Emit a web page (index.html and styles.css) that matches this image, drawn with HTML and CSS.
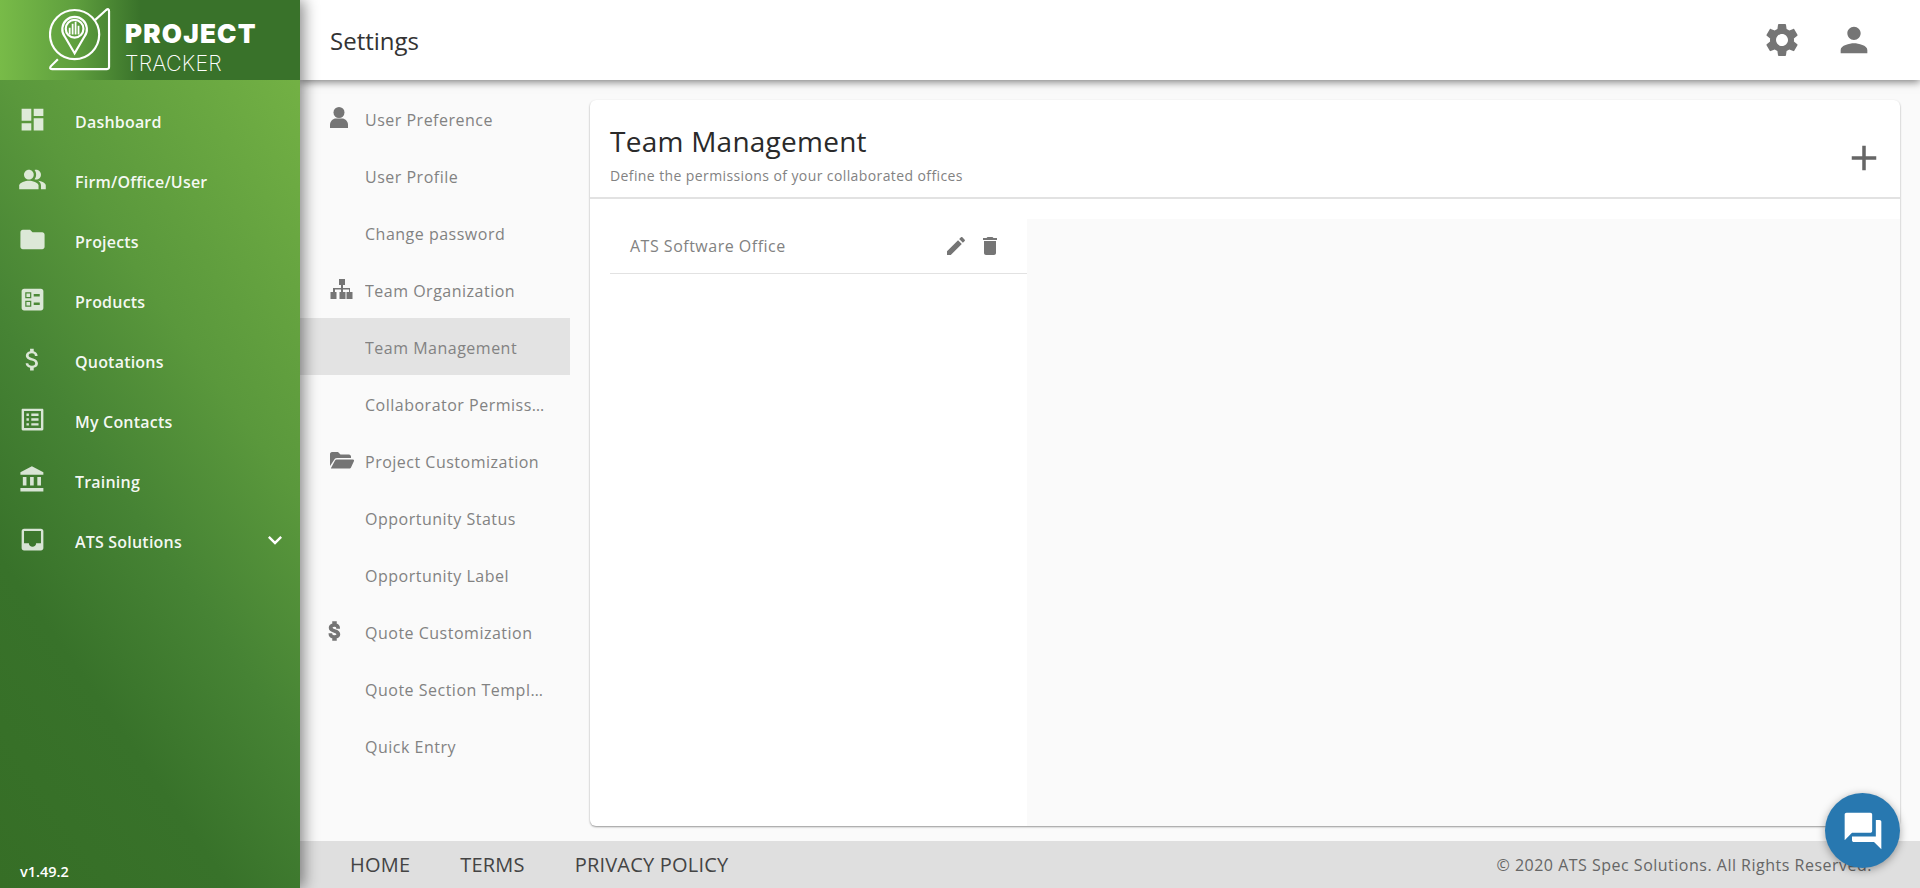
FILE: index.html
```html
<!DOCTYPE html>
<html lang="en">
<head>
    <meta charset="UTF-8">
    <title>Settings</title>
    <link rel="stylesheet" href="styles.css">
</head>
<body>
    <aside class="sidebar">
        <div class="brand">
            <svg class="brand-mark" viewBox="0 0 64 66" fill="none" stroke="#fff" stroke-width="2.2">
                <circle cx="26" cy="27" r="25"/>
                <path d="M47 12 L58 2 Q61 0 61 3 V60 Q61 62 59 62 H3 Q0 62 2 59 L9 52"/>
                <path d="M26 46 L16 29 A12.5 12.5 0 1 1 36 29 Z"/>
                <circle cx="26" cy="21" r="9"/>
                <path d="M21 27 V20 M24 27 V16 M27 27 V14 M30 27 V18" stroke-width="1.8"/>
            </svg>
            <div class="brand-text">
                <span class="brand-top">PROJECT</span>
                <span class="brand-bottom">TRACKER</span>
            </div>
        </div>
        <nav class="main-nav">
            <a class="nav-item"><svg viewBox="0 0 24 24"><path d="M3 13h8V3H3v10zm0 8h8v-6H3v6zm10 0h8V11h-8v10zm0-18v6h8V3h-8z"/></svg><span>Dashboard</span></a>
            <a class="nav-item"><svg viewBox="0 0 24 24"><path d="M16.67 13.13C18.04 14.06 19 15.32 19 17v3h4v-3c0-2.18-3.57-3.47-6.33-3.87z"/><path d="M15 12c2.21 0 4-1.79 4-4s-1.79-4-4-4c-.47 0-.91.1-1.33.24C14.5 5.27 15 6.58 15 8s-.5 2.73-1.33 3.76c.42.14.86.24 1.33.24z"/><path d="M9 12c2.21 0 4-1.79 4-4s-1.79-4-4-4-4 1.79-4 4 1.79 4 4 4z"/><path d="M9 13c-2.67 0-8 1.34-8 4v3h16v-3c0-2.66-5.33-4-8-4z"/></svg><span>Firm/Office/User</span></a>
            <a class="nav-item"><svg viewBox="0 0 24 24"><path d="M10 4H4c-1.1 0-1.99.9-1.99 2L2 18c0 1.1.9 2 2 2h16c1.1 0 2-.9 2-2V8c0-1.1-.9-2-2-2h-8l-2-2z"/></svg><span>Projects</span></a>
            <a class="nav-item"><svg viewBox="0 0 24 24"><path fill-rule="evenodd" d="M13 9.5h5v-2h-5v2zm0 7h5v-2h-5v2zm6 4.5H5c-1.1 0-2-.9-2-2V5c0-1.1.9-2 2-2h14c1.1 0 2 .9 2 2v14c0 1.1-.9 2-2 2zM6 11h5V6H6v5zm1-4h3v3H7V7zM6 18h5v-5H6v5zm1-4h3v3H7v-3z"/></svg><span>Products</span></a>
            <a class="nav-item"><svg viewBox="0 0 24 24"><path d="M11.8 10.9c-2.27-.59-3-1.2-3-2.15 0-1.09 1.01-1.85 2.7-1.85 1.78 0 2.44.85 2.5 2.1h2.21c-.07-1.72-1.12-3.3-3.21-3.81V3h-3v2.16c-1.94.42-3.5 1.68-3.5 3.61 0 2.31 1.91 3.46 4.7 4.13 2.5.6 3 1.48 3 2.41 0 .69-.49 1.79-2.7 1.79-2.06 0-2.87-.92-2.98-2.1h-2.2c.12 2.19 1.76 3.42 3.68 3.83V21h3v-2.15c1.95-.37 3.5-1.5 3.5-3.55 0-2.84-2.43-3.81-4.7-4.4z"/></svg><span>Quotations</span></a>
            <a class="nav-item"><svg viewBox="0 0 24 24"><path d="M19 5v14H5V5h14m1.1-2H3.9c-.5 0-.9.4-.9.9v16.2c0 .4.4.9.9.9h16.2c.4 0 .9-.5.9-.9V3.9c0-.5-.5-.9-.9-.9zM11 7h6v2h-6V7zm0 4h6v2h-6v-2zm0 4h6v2h-6zM7 7h2v2H7zm0 4h2v2H7zm0 4h2v2H7z"/></svg><span>My Contacts</span></a>
            <a class="nav-item"><svg viewBox="0 0 24 24"><path d="M4 10v7h3v-7H4zm6 0v7h3v-7h-3zM2 22h19v-3H2v3zm14-12v7h3v-7h-3zm-4.5-9L2 6v2h19V6l-9.5-5z"/></svg><span>Training</span></a>
            <a class="nav-item"><svg viewBox="0 0 24 24"><path d="M19 3H4.99c-1.11 0-1.98.89-1.98 2L3 19c0 1.1.88 2 1.99 2H19c1.1 0 2-.9 2-2V5c0-1.11-.9-2-2-2zm0 12h-4c0 1.66-1.35 3-3 3s-3-1.34-3-3H4.99V5H19v10z"/></svg><span>ATS Solutions</span><svg class="nav-arrow" viewBox="0 0 24 24"><path d="M16.59 8.59L12 13.17 7.41 8.59 6 10l6 6 6-6z"/></svg></a>
        </nav>
        <div class="version">v1.49.2</div>
    </aside>

    <div class="page">
        <header class="topbar">
            <h1>Settings</h1>
            <div class="topbar-icons">
                <svg viewBox="0 0 24 24"><path d="M19.14 12.94c.04-.3.06-.61.06-.94 0-.32-.02-.64-.07-.94l2.03-1.58c.18-.14.23-.41.12-.61l-1.92-3.32c-.12-.22-.37-.29-.59-.22l-2.39.96c-.5-.38-1.03-.7-1.62-.94l-.36-2.54c-.04-.24-.24-.41-.48-.41h-3.84c-.24 0-.43.17-.47.41l-.36 2.54c-.59.24-1.13.57-1.62.94l-2.39-.96c-.22-.08-.47 0-.59.22L2.74 8.87c-.12.21-.08.47.12.61l2.03 1.58c-.05.3-.09.63-.09.94s.02.64.07.94l-2.03 1.58c-.18.14-.23.41-.12.61l1.92 3.32c.12.22.37.29.59.22l2.39-.96c.5.38 1.03.7 1.62.94l.36 2.54c.05.24.24.41.48.41h3.84c.24 0 .44-.17.47-.41l.36-2.54c.59-.24 1.13-.56 1.62-.94l2.39.96c.22.08.47 0 .59-.22l1.92-3.32c.12-.22.07-.47-.12-.61l-2.01-1.58zM12 15.6c-1.98 0-3.6-1.62-3.6-3.6s1.62-3.6 3.6-3.6 3.6 1.62 3.6 3.6-1.62 3.6-3.6 3.6z"/></svg>
                <svg viewBox="0 0 24 24"><path d="M12 12c2.21 0 4-1.79 4-4s-1.79-4-4-4-4 1.79-4 4 1.79 4 4 4zm0 2c-2.67 0-8 1.34-8 4v2h16v-2c0-2.66-5.33-4-8-4z"/></svg>
            </div>
        </header>

        <div class="content">
            <nav class="sub-nav">
                <div class="sub-item">
                    <svg viewBox="0 0 24 24"><circle cx="9" cy="6.5" r="5.5"/><path d="M0 22v-3c0-4 3-6.500 6-6.500h6c3 0 6 2.500 6 6.500v3z"/></svg>
                    <span>User Preference</span>
                </div>
                <div class="sub-item"><span>User Profile</span></div>
                <div class="sub-item"><span>Change password</span></div>
                <div class="sub-item">
                    <svg viewBox="0 0 24 24"><path d="M9 2h6v6h-2v3h7v4h2.500v7h-6v-7H19v-2.500h-6V15h2.500v7h-6v-7H11v-2.500H5V15h1.500v7h-6v-7H3v-4h8V8H9z"/></svg>
                    <span>Team Organization</span>
                </div>
                <div class="sub-item active"><span>Team Management</span></div>
                <div class="sub-item"><span>Collaborator Permissions</span></div>
                <div class="sub-item">
                    <svg viewBox="0 0 24 24"><path d="M0 18V6c0-1 .8-2 2-2h6l2.500 2.500H19c1 0 2 1 2 2V10H7c-1.500 0-2.500.8-3 2z"/><path d="M1 20l4-7.500c.3-.6 1-1 1.700-1H23c.8 0 1.300.8 1 1.500l-3 6.500c-.3.6-1 1-1.700 1H1.800c-.7 0-1-.3-.8-.5z"/></svg>
                    <span>Project Customization</span>
                </div>
                <div class="sub-item"><span>Opportunity Status</span></div>
                <div class="sub-item"><span>Opportunity Label</span></div>
                <div class="sub-item">
                    <svg class="sub-dollar" viewBox="0 0 24 24"><path d="M11.8 10.9c-2.27-.59-3-1.2-3-2.15 0-1.09 1.01-1.85 2.7-1.85 1.78 0 2.44.85 2.5 2.1h2.21c-.07-1.72-1.12-3.3-3.21-3.81V3h-3v2.16c-1.94.42-3.5 1.68-3.5 3.61 0 2.31 1.91 3.46 4.7 4.13 2.5.6 3 1.48 3 2.41 0 .69-.49 1.79-2.7 1.79-2.06 0-2.87-.92-2.98-2.1h-2.2c.12 2.19 1.76 3.42 3.68 3.83V21h3v-2.15c1.95-.37 3.5-1.5 3.5-3.55 0-2.84-2.43-3.81-4.7-4.4z"/></svg>
                    <span>Quote Customization</span>
                </div>
                <div class="sub-item"><span>Quote Section Templates</span></div>
                <div class="sub-item"><span>Quick Entry</span></div>
            </nav>

            <main class="card">
                <div class="card-header">
                    <div>
                        <h2>Team Management</h2>
                        <p>Define the permissions of your collaborated offices</p>
                    </div>
                    <svg class="add-icon" viewBox="0 0 24 24"><path d="M19 13h-6v6h-2v-6H5v-2h6V5h2v6h6v2z"/></svg>
                </div>
                <div class="card-body">
                    <div class="team-list">
                        <div class="team-row">
                            <span>ATS Software Office</span>
                            <svg viewBox="0 0 24 24"><path d="M3 17.25V21h3.750L17.810 9.940l-3.750-3.750L3 17.250zM20.710 7.040c.39-.39.39-1.020 0-1.410l-2.340-2.340c-.39-.39-1.020-.39-1.410 0l-1.830 1.830 3.750 3.750 1.830-1.830z"/></svg>
                            <svg viewBox="0 0 24 24"><path d="M6 19c0 1.100.9 2 2 2h8c1.100 0 2-.9 2-2V7H6v12zM19 4h-3.500l-1-1h-5l-1 1H5v2h14V4z"/></svg>
                        </div>
                    </div>
                    <div class="team-detail"></div>
                </div>
            </main>
        </div>

        <footer class="footer">
            <a>HOME</a>
            <a>TERMS</a>
            <a>PRIVACY POLICY</a>
            <span class="copyright">© 2020 ATS Spec Solutions. All Rights Reserved.</span>
        </footer>
    </div>

    <button class="chat-button">
        <svg viewBox="0 0 24 24"><path d="M21 6h-2v9H6v2c0 .55.45 1 1 1h11l4 4V7c0-.55-.45-1-1-1zm-4 6V3c0-.55-.45-1-1-1H3c-.55 0-1 .45-1 1v14l4-4h10c.55 0 1-.45 1-1z"/></svg>
    </button>
</body>
</html>
```

FILE: styles.css
```css
* {
    box-sizing: border-box;
}

body {
    font-family: "Open Sans", sans-serif;
    background-color: #fafafa;
    margin: 0;
    height: 100vh;
    display: flex;
    overflow: hidden;
}

/* sidebar */
.sidebar {
    width: 300px;
    flex-shrink: 0;
    display: flex;
    flex-direction: column;
    background: linear-gradient(235deg, #75b345 3%, #5a983c 38%, #468334 57%, #38722a 75%, #366e26 100%);
    box-shadow: 4px 0 14px rgba(0, 0, 0, 0.45);
    z-index: 3;
}

.brand {
    height: 80px;
    flex-shrink: 0;
    display: flex;
    align-items: center;
    padding-left: 49px;
    gap: 13px;
    background: linear-gradient(90deg, #78bb48 0%, #5f9f3e 25%, #39722a 47%, #39722a 100%);
}

.brand-mark {
    width: 63px;
    height: 65px;
}

.brand-text {
    display: flex;
    flex-direction: column;
    margin-top: 14px;
    color: white;
    font-family: Inter, sans-serif;
}

.brand-top {
    font-size: 26px;
    font-weight: 900;
    letter-spacing: 1.2px;
    line-height: 30px;
}

.brand-bottom {
    font-size: 21.5px;
    font-weight: 200;
    letter-spacing: 0.2px;
    line-height: 24px;
    margin-top: 2px;
}

.main-nav {
    padding-top: 12px;
    flex: 1;
}

.nav-item {
    display: flex;
    align-items: center;
    height: 60px;
    padding-left: 18px;
    color: rgba(255, 255, 255, 0.95);
    font-size: 16px;
    font-weight: 600;
    letter-spacing: 0.2px;
}

.nav-item svg {
    width: 29px;
    height: 29px;
    margin-right: 28px;
    margin-top: -5px;
    fill: rgba(255, 255, 255, 0.8);
}

.nav-item .nav-arrow {
    margin: -4px 11px 0 auto;
    fill: white;
    width: 28px;
    height: 28px;
}

.version {
    color: white;
    font-size: 14.5px;
    font-weight: 600;
    padding: 0 0 7px 20px;
}

/* right side */
.page {
    flex: 1;
    min-width: 0;
    display: flex;
    flex-direction: column;
}

.topbar {
    height: 80px;
    flex-shrink: 0;
    display: flex;
    align-items: center;
    justify-content: space-between;
    padding: 0 46px 0 30px;
    background-color: white;
    box-shadow: 0 2px 8px rgba(0, 0, 0, 0.5);
    z-index: 2;
}

.topbar h1 {
    font-size: 24px;
    font-weight: 400;
    color: #333;
    margin: 0;
}

.topbar-icons {
    display: flex;
    gap: 32px;
}

.topbar-icons svg {
    width: 40px;
    height: 40px;
    fill: #757575;
}

.content {
    flex: 1;
    min-height: 0;
    display: flex;
}

.sub-nav {
    width: 270px;
    flex-shrink: 0;
    padding-top: 10px;
}

.sub-item {
    display: flex;
    align-items: center;
    height: 57px;
    padding: 3px 22px 0 65px;
    color: #828282;
    font-size: 16px;
    letter-spacing: 0.5px;
}

.sub-item span {
    white-space: nowrap;
    overflow: hidden;
    text-overflow: ellipsis;
}

.sub-item svg {
    width: 24px;
    height: 24px;
    margin-left: -35px;
    margin-right: 11px;
    margin-top: -5px;
    fill: #757575;
    flex-shrink: 0;
}

.sub-item .sub-dollar {
    stroke: #757575;
    stroke-width: 1.5;
    margin-left: -42px;
    margin-right: 18px;
}

.sub-item.active {
    background-color: #e3e3e3;
}

.card {
    flex: 1;
    margin: 20px 20px 15px 20px;
    display: flex;
    flex-direction: column;
    background-color: white;
    border-radius: 6px;
    box-shadow: 0 1px 2px rgba(0, 0, 0, 0.4);
}

.card-header {
    height: 99px;
    flex-shrink: 0;
    display: flex;
    align-items: center;
    justify-content: space-between;
    padding: 0 15px 0 20px;
    border-bottom: 2px solid #e2e2e2;
}

.card-header h2 {
    font-size: 28px;
    font-weight: 400;
    color: #2a2a2a;
    letter-spacing: 0.25px;
    margin: 10px 0 0 0;
    line-height: 38px;
}

.card-header p {
    font-size: 14px;
    color: #828282;
    letter-spacing: 0.4px;
    margin: 6px 0 0 0;
}

.add-icon {
    width: 42px;
    height: 42px;
    margin-top: 18px;
    fill: #666;
}

.card-body {
    flex: 1;
    min-height: 0;
    display: flex;
    padding: 20px 0 0 20px;
    border-radius: 0 0 6px 6px;
}

.team-list {
    width: 417px;
    flex-shrink: 0;
}

.team-row {
    height: 55px;
    display: flex;
    align-items: center;
    gap: 10px;
    padding: 0 25px 0 20px;
    border-bottom: 1px solid #e2e2e2;
    color: #828282;
    font-size: 16px;
    letter-spacing: 0.5px;
}

.team-row span {
    flex: 1;
}

.team-row svg {
    width: 24px;
    height: 24px;
    fill: #757575;
}

.team-detail {
    flex: 1;
    background-color: #fafafa;
}

.footer {
    height: 47px;
    flex-shrink: 0;
    display: flex;
    align-items: center;
    gap: 50px;
    padding: 0 48px 0 50px;
    background-color: #dfdfdf;
}

.footer a {
    color: #444;
    font-size: 20px;
    letter-spacing: 0.2px;
}

.copyright {
    margin-left: auto;
    color: #666;
    font-size: 16px;
    letter-spacing: 0.5px;
}

/* floating chat */
.chat-button {
    position: fixed;
    right: 20px;
    bottom: 20px;
    width: 75px;
    height: 75px;
    padding: 0;
    border: none;
    border-radius: 50%;
    display: flex;
    align-items: center;
    justify-content: center;
    background-color: #2878b0;
    box-shadow: 0 2px 8px rgba(0, 0, 0, 0.35);
    z-index: 5;
}

.chat-button svg {
    width: 44px;
    height: 44px;
    fill: white;
}
```
